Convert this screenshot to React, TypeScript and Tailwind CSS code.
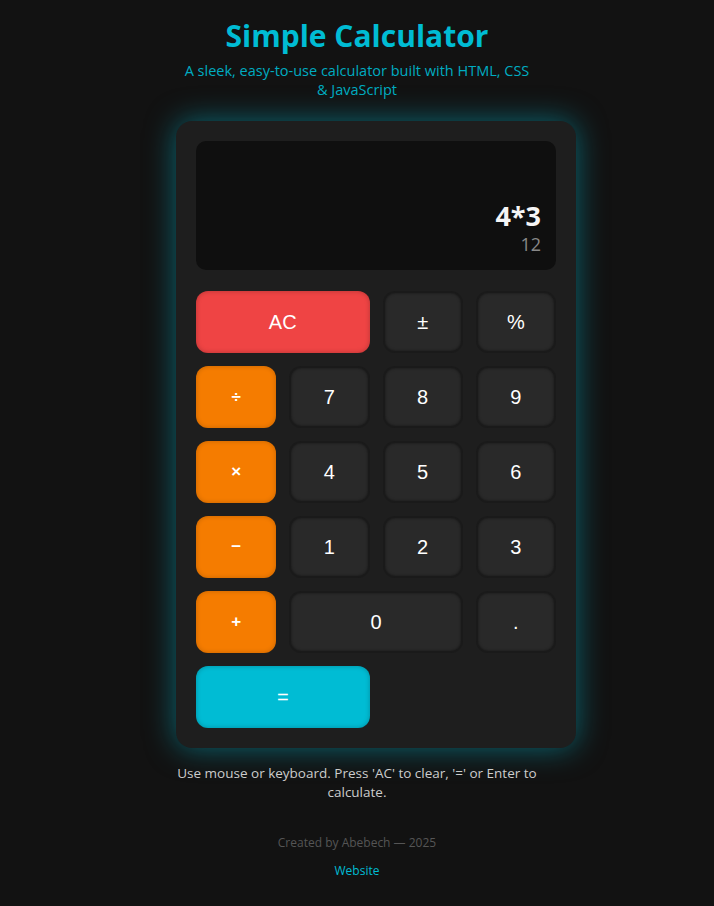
import React from 'react';

type Key = {
  label: string;
  kind: 'num' | 'op' | 'clear' | 'eq';
  wide?: boolean;
};

const keys: Key[] = [
  { label: 'AC', kind: 'clear', wide: true },
  { label: '±', kind: 'num' },
  { label: '%', kind: 'num' },
  { label: '÷', kind: 'op' },
  { label: '7', kind: 'num' },
  { label: '8', kind: 'num' },
  { label: '9', kind: 'num' },
  { label: '×', kind: 'op' },
  { label: '4', kind: 'num' },
  { label: '5', kind: 'num' },
  { label: '6', kind: 'num' },
  { label: '−', kind: 'op' },
  { label: '1', kind: 'num' },
  { label: '2', kind: 'num' },
  { label: '3', kind: 'num' },
  { label: '+', kind: 'op' },
  { label: '0', kind: 'num', wide: true },
  { label: '.', kind: 'num' },
  { label: '=', kind: 'eq', wide: true },
];

const kindClass: Record<Key['kind'], string> = {
  num: 'bg-[#292929] text-[20px] border-2 border-[#1a1a1a] shadow-[inset_0_0_3px_rgba(0,0,0,0.45)]',
  op: 'bg-[#f57c00] text-[17px] font-bold shadow-[inset_0_0_5px_rgba(0,0,0,0.2)]',
  clear: 'bg-[#ef4444] text-[20px] shadow-[inset_0_0_5px_rgba(0,0,0,0.25)]',
  eq: 'bg-[#00bcd4] text-[20px] shadow-[inset_0_0_5px_rgba(0,0,0,0.25)]',
};

export default function App() {
  return (
    <div className="min-h-[906px] bg-[#121212] flex flex-col items-center pt-[17px] font-['Open_Sans','Noto_Sans',sans-serif]">
      {/* Header */}
      <h1 className="text-[30px] leading-[38px] font-bold text-[#00bcd4]">
        Simple Calculator
      </h1>
      <p className="mt-[6px] w-[352px] text-center text-[14.5px] leading-[19px] text-[#00acc1]">
        A sleek, easy-to-use calculator built with HTML, CSS &amp; JavaScript
      </p>

      {/* Calculator */}
      <div className="ml-[38px] mt-[22px] w-[400px] rounded-[16px] bg-[#1e1e1e] p-[20px] shadow-[0_0_30px_rgba(0,188,212,0.5)]">
        <div className="h-[129px] rounded-[10px] bg-[#0f0f0f] px-[15px] pb-[15px] flex flex-col items-end justify-end">
          <div className="text-[27px] leading-[32px] font-bold text-[#f5f5f5]">4*3</div>
          <div className="mt-[1px] text-[18px] leading-[22px] text-[#888888]">12</div>
        </div>

        <div className="mt-[21px] grid grid-cols-4 gap-[13px] font-['Liberation_Sans',Arial,sans-serif]">
          {keys.map(k => (
            <button
              key={k.label}
              className={`h-[62px] rounded-[12px] text-white flex items-center justify-center ${
                k.wide ? 'col-span-2' : ''
              } ${kindClass[k.kind]}`}
            >
              {k.label}
            </button>
          ))}
        </div>
      </div>

      {/* Footer */}
      <p className="mt-[16px] w-[370px] text-center text-[13.5px] leading-[19px] text-[#cccccc]">
        Use mouse or keyboard. Press 'AC' to clear, '=' or Enter to calculate.
      </p>
      <p className="mt-[33px] text-[12px] leading-[16px] text-[#555555]">Created by Abebech — 2025</p>
      <a className="mt-[12px] text-[12px] leading-[16px] text-[#00bcd4]">Website</a>
    </div>
  );
}
